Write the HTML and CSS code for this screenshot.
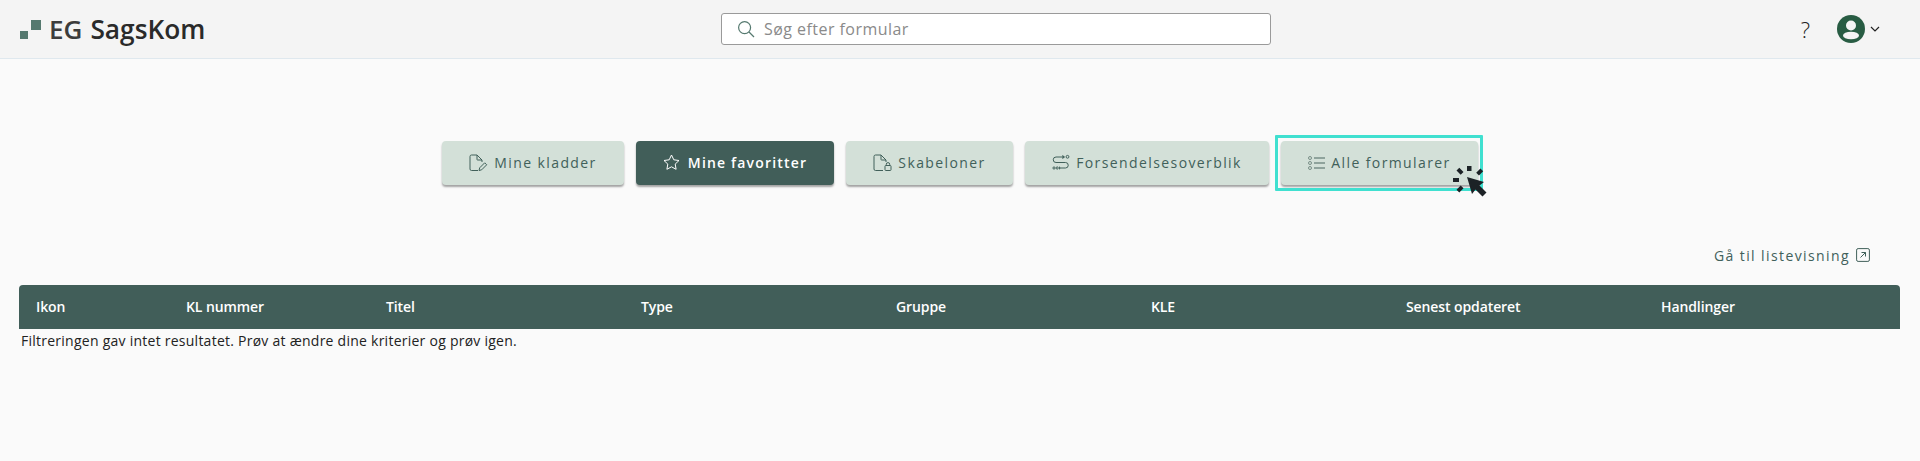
FILE: index.html
```html
<!DOCTYPE html>
<html lang="en">
<head>
    <meta charset="UTF-8">
    <title>EG SagsKom</title>
    <link rel="stylesheet" href="styles.css">
</head>
<body>
<header class="topbar">
    <div class="brand">
        <svg class="brand-mark" width="22" height="21" viewBox="0 0 22 21"><rect x="0" y="12" width="8" height="8" fill="#55796f"/><rect x="11" y="1" width="10" height="10" fill="#55796f"/></svg>
        <span class="brand-eg">EG</span>
        <span class="brand-name">SagsKom</span>
    </div>
    <div class="search">
        <svg width="18" height="18" viewBox="0 0 18 18" fill="none" stroke="#55796f" stroke-width="1.2"><circle cx="7.6" cy="7.6" r="6"/><path d="M12 12l5 5"/></svg>
        <span class="search-text">Søg efter formular</span>
    </div>
    <div class="top-actions">
        <span class="help">?</span>
        <svg width="28" height="28" viewBox="0 0 28 28"><circle cx="14" cy="14" r="14" fill="#285c43"/><circle cx="14" cy="10.5" r="5" fill="#f4f4f4"/><ellipse cx="14" cy="20.5" rx="8" ry="3.8" fill="#f4f4f4"/></svg>
        <svg class="caret" width="10" height="6" viewBox="0 0 10 6" fill="none" stroke="#222" stroke-width="1.2"><path d="M1 1l4 4 4-4"/></svg>
    </div>
</header>

<!-- KNAPPER -->
<nav class="tabs">
    <div class="tab tab-1">
        <svg width="19" height="18" viewBox="0 0 19 18" fill="none" stroke="currentColor" stroke-width="1"><path d="M9 16.500H2.500a1.500 1.500 0 0 1-1.500-1.500V2.500A1.500 1.500 0 0 1 2.500 1H8l5 5v2"/><path d="M8 1v4.500a.5.500 0 0 0 .5.500H13"/><path d="M10 16.500l.7-2.700 5-5 2 2-5 5z"/></svg>
        <span>Mine kladder</span>
    </div>
    <div class="tab tab-2 active">
        <svg width="17" height="17" viewBox="0 0 17 17" fill="none" stroke="currentColor" stroke-width="1"><path d="M8.500 1l2.300 4.800 5.200.7-3.800 3.600.9 5.200-4.600-2.500-4.600 2.500.9-5.200L1 6.500l5.200-.7z"/></svg>
        <span>Mine favoritter</span>
    </div>
    <div class="tab tab-3">
        <svg width="19" height="18" viewBox="0 0 19 18" fill="none" stroke="currentColor" stroke-width="1"><path d="M10 16.500H2.500a1.500 1.500 0 0 1-1.500-1.500V2.500A1.500 1.500 0 0 1 2.500 1H8l5 5v2"/><path d="M8 1v4.500a.5.500 0 0 0 .5.500H13"/><rect x="12" y="11.500" width="6" height="5" rx=".8"/><path d="M13.300 11.500v-1.200a1.700 1.700 0 0 1 3.400 0v1.200"/></svg>
        <span>Skabeloner</span>
    </div>
    <div class="tab tab-4">
        <svg width="18" height="18" viewBox="0 0 18 18" fill="none" stroke="currentColor" stroke-width="1"><path d="M12 3H4a2.500 2.500 0 0 0 0 5.500h9.500a2.500 2.500 0 0 1 0 5.500H9"/><path d="M10.500 1.500L12.500 3l-2 1.500" fill="currentColor"/><circle cx="15.500" cy="2.800" r="1.400"/><circle cx="2" cy="14" r="1.100"/><circle cx="5.200" cy="14" r="1.100"/><path d="M7 12.800L8.600 14 7 15.200" fill="currentColor"/></svg>
        <span>Forsendelsesoverblik</span>
    </div>
    <div class="tab tab-5 marked">
        <svg width="17" height="14" viewBox="0 0 17 14" fill="none" stroke="#7a8f88" stroke-width="1"><circle cx="2" cy="2" r="1.500"/><circle cx="2" cy="7" r="1.500"/><circle cx="2" cy="12" r="1.500"/><path stroke-width="1.600" d="M6 2h11M6 7h11M6 12h11"/></svg>
        <span>Alle formularer</span>
        <svg class="cursor" width="36" height="34" viewBox="0 0 36 34" fill="#1c2226">
            <path d="M14 11l17 5-4.500 3.500 7 7-4 4-7-7-3.500 4.500z"/>
            <rect x="14" y="0" width="4.500" height="5"/>
            <rect x="0" y="12" width="6" height="4"/>
            <path d="M6.300 1.800L3.500 4.600 7.700 8.800 10.500 6zM23.200 6.700L27.400 2.500 30.200 5.300 26 9.500zM3.500 23.700L7.700 19.500 10.500 22.300 6.300 26.500z"/>
        </svg>
    </div>
</nav>

<div class="list-link">
    Gå til listevisning
    <svg width="14" height="14" viewBox="0 0 14 14" fill="none" stroke="#41605a" stroke-width="1"><rect x=".6" y=".6" width="12.800" height="12.800" rx="1.500"/><path d="M4.500 9.500l5-5M5.500 4.500h4v4"/></svg>
</div>

<div class="table-head">
    <span>Ikon</span>
    <span>KL nummer</span>
    <span>Titel</span>
    <span>Type</span>
    <span>Gruppe</span>
    <span>KLE</span>
    <span>Senest opdateret</span>
    <span>Handlinger</span>
</div>
<p class="empty">Filtreringen gav intet resultatet. Prøv at ændre dine kriterier og prøv igen.</p>
</body>
</html>
```

FILE: styles.css
```css
html {
    box-sizing: border-box;
    height: 100%;
}

*, *:before, *:after {
    box-sizing: inherit;
}

body {
    margin: 0;
    height: 100%;
    overflow: hidden;
    background: #fafafa;
    color: #222;
    font-family: 'Open Sans', sans-serif;
}

.topbar {
    display: flex;
    align-items: center;
    height: 59px;
    padding: 0 20px;
    background: #f4f4f4;
    border-bottom: 1px solid #dfe8ee;
}

.brand {
    display: flex;
    align-items: center;
    width: 701px;
    flex: none;
}

.brand-mark {
    margin-right: 7px;
}

.brand-eg {
    font-size: 26px;
    font-weight: 600;
    color: #3c3c3c;
    margin-right: 8px;
}

.brand-name {
    font-size: 26.3px;
    font-weight: 600;
    color: #2a2a2a;
}

.search {
    display: flex;
    align-items: center;
    gap: 9px;
    width: 550px;
    height: 32px;
    padding-left: 15px;
    background: #fff;
    border: 1px solid #9a9a9a;
    border-radius: 3px;
}

.search-text {
    font-size: 16px;
    letter-spacing: .45px;
    color: #8a8a8a;
}

.top-actions {
    display: flex;
    align-items: center;
    margin-left: auto;
    margin-right: 20px;
}

.help {
    font-size: 22px;
    font-weight: 300;
    margin-right: 27px;
}

.caret {
    margin-left: 5px;
}

.tabs {
    display: flex;
    gap: 12px;
    margin: 82px 0 0 442px;
}

.tab {
    display: flex;
    align-items: center;
    justify-content: center;
    gap: 6px;
    height: 44px;
    padding-bottom: 1px;
    background: #d3e0d8;
    color: #41605a;
    border-radius: 4px;
    font-size: 14px;
    font-weight: 500;
    letter-spacing: 1.4px;
    box-shadow: 0 2px 2px rgba(0, 0, 0, .35);
}

.tab-1 { width: 182px; }
.tab-2 { width: 198px; }
.tab-3 { width: 167px; }
.tab-4 { width: 244px; }
.tab-5 { width: 197px; }

.tab.active {
    gap: 8px;
    background: #415e59;
    color: #fff;
    font-weight: 600;
    letter-spacing: 1.17px;
}

.tab.marked {
    position: relative;
}

/* markering rundt om knappen */
.tab.marked:before {
    content: "";
    position: absolute;
    top: -6px;
    right: -5px;
    bottom: -6px;
    left: -6px;
    border: 3px solid #40e0d0;
    border-radius: 1px;
}

.cursor {
    position: absolute;
    left: 172px;
    top: 25px;
}

.list-link {
    display: flex;
    align-items: center;
    justify-content: flex-end;
    gap: 6px;
    margin: 60px 50px 0 0;
    height: 20px;
    font-size: 14px;
    letter-spacing: 1.4px;
    color: #41605a;
}

.table-head {
    display: grid;
    grid-template-columns: 150px 200px repeat(6, 255px);
    align-items: center;
    height: 44px;
    padding-bottom: 1px;
    margin: 20px 20px 0 19px;
    background: #415e59;
    color: #fff;
    border-radius: 4px 4px 0 0;
    font-size: 14px;
    font-weight: 600;
    letter-spacing: -.1px;
}

.table-head span {
    padding-left: 17px;
}

.empty {
    margin: 2px 0 0 21px;
    font-size: 14px;
    letter-spacing: .25px;
    color: #222;
}
```
